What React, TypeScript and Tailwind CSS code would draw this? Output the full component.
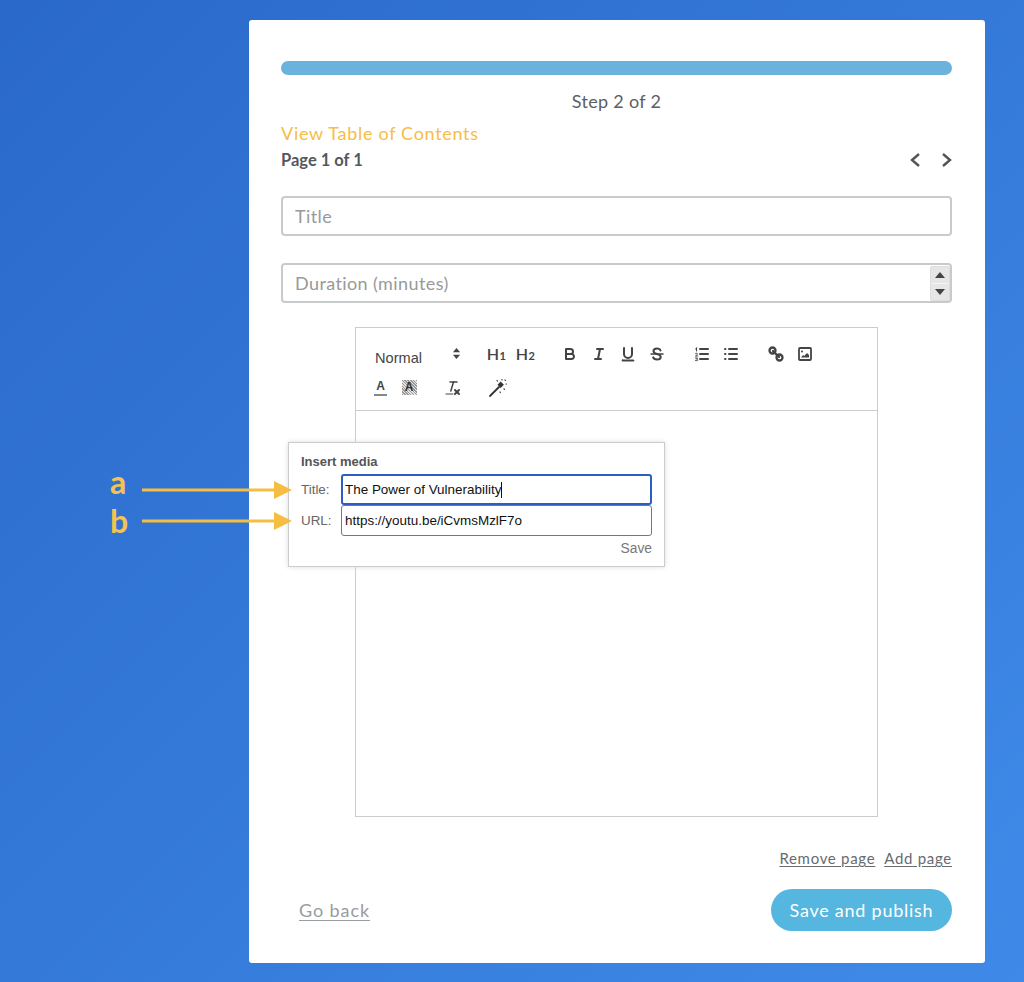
import React from "react";

const ink = "#444";

function Ico({ children, cls = "" }: { children: React.ReactNode; cls?: string }) {
  return (
    <svg viewBox="0 0 18 18" fill="none" stroke={ink} strokeWidth="2" strokeLinecap="round" strokeLinejoin="round" className={"w-[18px] h-[18px] " + cls}>
      {children}
    </svg>
  );
}

function Btn({ children, gap = false, wide = false }: { children: React.ReactNode; gap?: boolean; wide?: boolean }) {
  return <div className={"w-[29px] h-[33px] flex items-center justify-center shrink-0 " + (gap ? "ml-[15px] " : "") + (wide ? "ml-[16px]" : "")}>{children}</div>;
}

function Head({ n }: { n: string }) {
  return (
    <span className="font-['Lato',sans-serif] font-semibold text-[16px] leading-none text-[#444] tracking-[0.5px]">
      H<span className="text-[11px] font-bold">{n}</span>
    </span>
  );
}

const lines = (
  <>
    <line x1="7" y1="4" x2="15" y2="4" />
    <line x1="7" y1="9" x2="15" y2="9" />
    <line x1="7" y1="14" x2="15" y2="14" />
  </>
);

function Toolbar() {
  return (
    <div className="h-[83px] border-b border-[#ccc] px-[10px] pt-[9px]">
      <div className="flex h-[33px] items-center">
        <div className="w-[102px] flex items-center justify-between pl-[9px] pr-[7px] shrink-0">
          <span className="font-['Liberation_Sans',sans-serif] font-medium text-[14.6px] text-[#444] mt-[10px]">Normal</span>
          <svg viewBox="0 0 10 14" className="w-[9px] h-[13px]" fill="#444">
            <polygon points="5,1 9,5.5 1,5.5" />
            <polygon points="5,13 9,8.5 1,8.5" />
          </svg>
        </div>
        <div className="ml-[14px] flex">
          <Btn><Head n="1" /></Btn>
          <Btn><Head n="2" /></Btn>
        </div>
        <Btn gap>
          <Ico>
            <path d="M5,4H9.5A2.5,2.5,0,0,1,12,6.5v0A2.5,2.5,0,0,1,9.5,9H5V4Z" />
            <path d="M5,9h5.5A2.5,2.5,0,0,1,13,11.5v0A2.5,2.5,0,0,1,10.5,14H5V9Z" />
          </Ico>
        </Btn>
        <Btn>
          <Ico>
            <line x1="7" y1="4" x2="13" y2="4" />
            <line x1="5" y1="14" x2="11" y2="14" />
            <line x1="8" y1="14" x2="10" y2="4" />
          </Ico>
        </Btn>
        <Btn>
          <Ico>
            <path d="M5,3V9a4,4,0,0,0,4,4h0a4,4,0,0,0,4-4V3" />
            <rect x="3" y="15" width="12" height="1" rx="0.5" fill={ink} strokeWidth="1" />
          </Ico>
        </Btn>
        <Btn>
          <Ico>
            <line x1="3" y1="9" x2="15" y2="9" strokeWidth="1.5" />
            <path d="M12.5,5.5C12,4 10.5,3.5 9,3.5C7,3.5 5.5,4.5 5.5,6C5.5,7.5 6.5,8.4 9,9C11.5,9.6 12.7,10.5 12.7,12C12.7,13.6 11,14.5 9,14.5C7.2,14.5 5.7,13.9 5.2,12.4" />
          </Ico>
        </Btn>
        <Btn wide>
          <Ico>
            {lines}
            <line x1="2.5" y1="4" x2="4" y2="3" strokeWidth="1" />
            <line x1="3.5" y1="3" x2="3.5" y2="6" strokeWidth="1" />
            <path d="M2.5,8.5C3,8 4.5,8 4.5,9.2L2.5,11H4.7" strokeWidth="1" />
            <path d="M2.5,13h2l-1,1.2c1,0 1.2,.5 1.2,.9c0,.7-1.3,.9-2.2,.4" strokeWidth="1" />
          </Ico>
        </Btn>
        <Btn>
          <Ico>
            {lines}
            <line x1="3" y1="4" x2="3.5" y2="4" />
            <line x1="3" y1="9" x2="3.5" y2="9" />
            <line x1="3" y1="14" x2="3.5" y2="14" />
          </Ico>
        </Btn>
        <Btn wide>
          <Ico>
            <circle cx="5.5" cy="5.5" r="3" strokeWidth="2.3" />
            <circle cx="12.5" cy="12.5" r="3" strokeWidth="2.3" />
            <line x1="6" y1="6" x2="12" y2="12" strokeWidth="2.4" />
          </Ico>
        </Btn>
        <Btn>
          <Ico>
            <rect x="3" y="3" width="12" height="12" rx="1" strokeWidth="1.8" />
            <circle cx="6" cy="6.5" r="1" fill={ink} stroke="none" />
            <polygon points="5,12.5 7,10 8.2,11 11,8 13,10 13,12.5" fill={ink} stroke="none" />
          </Ico>
        </Btn>
      </div>
      <div className="flex h-[33px] items-center mt-px">
        <Btn>
          <div className="flex flex-col items-center">
            <span className="font-['Liberation_Sans',sans-serif] font-bold text-[12px] leading-[13px] text-[#444]">A</span>
            <div className="w-[13px] h-[2px] mt-[1px] bg-[#888]" />
          </div>
        </Btn>
        <div className="w-[28px] h-[33px] flex items-center justify-center shrink-0">
          <div className="w-[15px] h-[15px] bg-[repeating-linear-gradient(45deg,#999_0px,#999_1px,#e4e4e4_1px,#e4e4e4_2px)] flex items-center justify-center">
            <span className="font-['Liberation_Sans',sans-serif] font-bold text-[12px] leading-[13px] text-[#333]">A</span>
          </div>
        </div>
        <div className="ml-[14px]">
          <Btn>
            <Ico>
              <line x1="7" y1="3" x2="14" y2="3" strokeWidth="1.5" />
              <line x1="10.5" y1="3" x2="7.8" y2="12" strokeWidth="1.5" />
              <line x1="3" y1="15" x2="10" y2="15" strokeWidth="1.2" />
              <line x1="12" y1="11" x2="16" y2="15" />
              <line x1="16" y1="11" x2="12" y2="15" />
            </Ico>
          </Btn>
        </div>
        <Btn wide>
          <svg viewBox="0 0 20 20" className="w-[20px] h-[20px] ml-[2px]" fill="none" stroke="#333" strokeLinecap="round">
            <line x1="2" y1="18" x2="11" y2="9" strokeWidth="1.8" />
            <rect x="10.5" y="4.5" width="4.5" height="4.5" fill="#333" stroke="none" transform="rotate(45 12.7 6.7)" />
            <g strokeWidth="1.2">
              <line x1="9" y1="2.5" x2="9.4" y2="3" />
              <line x1="14" y1="1.5" x2="14" y2="2" />
              <line x1="18" y1="6" x2="18.5" y2="6" />
              <line x1="16" y1="11" x2="16.4" y2="11.4" />
              <line x1="12" y1="14" x2="12.3" y2="14.5" />
              <line x1="17" y1="2" x2="17.3" y2="2.4" />
            </g>
          </svg>
        </Btn>
      </div>
    </div>
  );
}

function Arrow({ top }: { top: string }) {
  return (
    <svg viewBox="0 0 150 20" className={"absolute left-[142px] w-[150px] h-[20px] " + top}>
      <rect x="0" y="8.5" width="135" height="3" fill="#f5bd41" />
      <polygon points="132,1 150,10 132,19" fill="#f5bd41" />
    </svg>
  );
}

function Popover() {
  return (
    <div className="absolute left-[39px] top-[422px] w-[377px] h-[125px] bg-white border border-[#ccc] shadow-[0_0_5px_#ddd] pl-[12px] pr-[12px] pt-[11px] font-['Liberation_Sans',sans-serif]">
      <div className="text-[13px] leading-[16px] font-bold text-[#555]">Insert media</div>
      <div className="mt-[4px] flex items-center h-[31px]">
        <span className="w-[40px] text-[13.4px] text-[#666] mt-[2px]">Title:</span>
        <div className="flex-1 h-[31px] border-2 border-[#2c5fc0] rounded-[3px] pl-[2px] pt-px flex items-center text-[13.45px] text-[#111]">
          The Power of Vulnerability<span className="w-px h-[16px] bg-[#111]" />
        </div>
      </div>
      <div className="flex items-center h-[31px]">
        <span className="w-[40px] text-[13.4px] text-[#666] mt-[2px]">URL:</span>
        <div className="flex-1 h-[31px] border border-[#777] rounded-[3px] pl-[3px] pt-px flex items-center text-[13.45px] text-[#111]">
          https://youtu.be/iCvmsMzlF7o
        </div>
      </div>
      <div className="mt-[5px] text-right text-[13.8px] leading-[16px] text-[#777]">Save</div>
    </div>
  );
}

export default function App() {
  return (
    <div className="relative w-[1024px] h-[982px] overflow-hidden pt-[20px] pl-[249px] bg-[linear-gradient(135deg,#2a69c9_0%,#3f8ae8_100%)] font-['Lato',sans-serif]">
      <div className="relative w-[736px] h-[943px] bg-white rounded-[3px] pl-[32px] pr-[33px] pt-[41px]">
        <div className="h-[14px] rounded-full bg-[#6bb3dc]" />
        <div className="mt-[14px] h-[24px] text-center text-[18px] leading-[24px] text-[#5b6066] tracking-[0.3px]">Step 2 of 2</div>
        <div className="mt-[8px] h-[24px] text-[18px] leading-[24px] text-[#f7bd45] tracking-[0.7px]">View Table of Contents</div>
        <div className="mt-[1px] h-[28px] flex items-center justify-between">
          <span className="text-[16.5px] font-bold text-[#54585d]">Page 1 of 1</span>
          <div className="flex items-center gap-[13px] text-[#50555a]">
            <svg viewBox="0 0 18 18" className="w-[18px] h-[18px]" fill="none" stroke="currentColor" strokeWidth="2.4">
              <polyline points="16,3 9,9 16,15" />
            </svg>
            <svg viewBox="0 0 18 18" className="w-[18px] h-[18px]" fill="none" stroke="currentColor" strokeWidth="2.4">
              <polyline points="9,3 16,9 9,15" />
            </svg>
          </div>
        </div>
        <input
          placeholder="Title"
          className="mt-[22px] block w-full h-[40px] border-2 border-[#c8cbce] rounded-[4px] pl-[12px] text-[18px] tracking-[0.4px] outline-none placeholder:text-[#999]"
        />
        <div className="mt-[27px] h-[40px] border-2 border-[#c8cbce] rounded-[4px] pl-[12px] flex items-center justify-between">
          <span className="text-[18px] text-[#999] tracking-[0.4px]">Duration (minutes)</span>
          <div className="w-[20px] h-[35px] flex flex-col bg-[#e6e6e6] border border-[#ddd] rounded-[2px]">
            <div className="flex-1 flex items-center justify-center border-b border-[#f4f4f4]">
              <svg viewBox="0 0 10 6" className="w-[10px] h-[6px]" fill="#444"><polygon points="5,0 10,6 0,6" /></svg>
            </div>
            <div className="flex-1 flex items-center justify-center">
              <svg viewBox="0 0 10 6" className="w-[10px] h-[6px]" fill="#444"><polygon points="0,0 10,0 5,6" /></svg>
            </div>
          </div>
        </div>
        <div className="mt-[24px] mx-[74px] w-[523px] h-[490px] border border-[#ccc]">
          <Toolbar />
        </div>
        <div className="mt-[30px] h-[22px] flex justify-end gap-[9px] text-[15px] leading-[22px] text-[#666b70] tracking-[0.7px] underline underline-offset-[2px]">
          <span>Remove page</span>
          <span>Add page</span>
        </div>
        <div className="mt-[20px] flex items-center justify-between">
          <span className="ml-[18px] text-[18px] text-[#999ca0] tracking-[0.9px] underline underline-offset-[3px]">Go back</span>
          <div className="w-[181px] h-[42px] rounded-full bg-[#55b6df] flex items-center justify-center text-[18px] text-white tracking-[0.75px]">
            Save and publish
          </div>
        </div>
        <Popover />
      </div>
      <Arrow top="top-[480px]" />
      <Arrow top="top-[511px]" />
      <span className="absolute left-[110px] top-[462px] text-[32px] leading-[40px] font-bold text-[#f5c350]">a</span>
      <span className="absolute left-[110px] top-[501px] text-[32px] leading-[40px] font-bold text-[#f5c350]">b</span>
    </div>
  );
}
